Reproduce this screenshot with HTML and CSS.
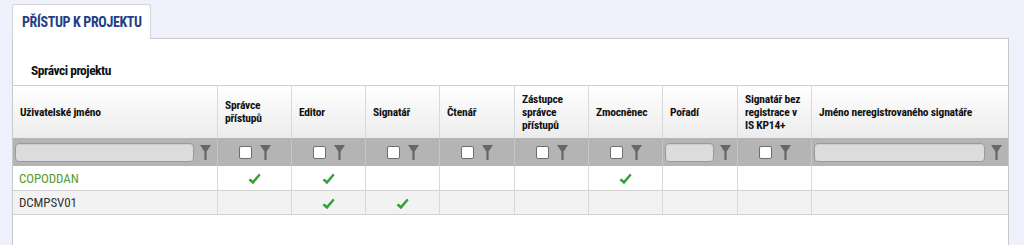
FILE: index.html
```html
<!DOCTYPE html>
<html lang="cs">
<head>
<meta charset="utf-8">
<title>Přístup k projektu</title>
<link rel="stylesheet" href="styles.css">
</head>
<body>
<div class="page">
  <div class="tabs">
    <div class="tab">PŘÍSTUP K PROJEKTU</div>
  </div>
  <div class="panel">
    <div class="title">Správci projektu</div>
    <table class="grid">
      <colgroup>
        <col class="c-name">
        <col class="c-std"><col class="c-std"><col class="c-std"><col class="c-wide">
        <col class="c-std"><col class="c-std"><col class="c-wide"><col class="c-std">
        <col class="c-last">
      </colgroup>
      <thead>
        <tr class="head">
          <th>Uživatelské jméno</th>
          <th>Správce<br>přístupů</th>
          <th>Editor</th>
          <th>Signatář</th>
          <th>Čtenář</th>
          <th>Zástupce<br>správce<br>přístupů</th>
          <th>Zmocněnec</th>
          <th>Pořadí</th>
          <th>Signatář bez<br>registrace v<br>IS KP14+</th>
          <th>Jméno neregistrovaného signatáře</th>
        </tr>
        <tr class="filter">
          <td><div class="f f-text"><span class="inp"></span><svg class="funnel" viewBox="0 0 11 15"><path d="M0 0H11L6.6 6.5V15H4.4V6.5Z"/></svg></div></td>
          <td><div class="f f-check"><span class="cb"></span><svg class="funnel" viewBox="0 0 11 15"><path d="M0 0H11L6.6 6.5V15H4.4V6.5Z"/></svg></div></td>
          <td><div class="f f-check"><span class="cb"></span><svg class="funnel" viewBox="0 0 11 15"><path d="M0 0H11L6.6 6.5V15H4.4V6.5Z"/></svg></div></td>
          <td><div class="f f-check"><span class="cb"></span><svg class="funnel" viewBox="0 0 11 15"><path d="M0 0H11L6.6 6.5V15H4.4V6.5Z"/></svg></div></td>
          <td><div class="f f-check"><span class="cb"></span><svg class="funnel" viewBox="0 0 11 15"><path d="M0 0H11L6.6 6.5V15H4.4V6.5Z"/></svg></div></td>
          <td><div class="f f-check"><span class="cb"></span><svg class="funnel" viewBox="0 0 11 15"><path d="M0 0H11L6.6 6.5V15H4.4V6.5Z"/></svg></div></td>
          <td><div class="f f-check"><span class="cb"></span><svg class="funnel" viewBox="0 0 11 15"><path d="M0 0H11L6.6 6.5V15H4.4V6.5Z"/></svg></div></td>
          <td><div class="f f-text"><span class="inp"></span><svg class="funnel" viewBox="0 0 11 15"><path d="M0 0H11L6.6 6.5V15H4.4V6.5Z"/></svg></div></td>
          <td><div class="f f-check"><span class="cb"></span><svg class="funnel" viewBox="0 0 11 15"><path d="M0 0H11L6.6 6.5V15H4.4V6.5Z"/></svg></div></td>
          <td><div class="f f-text"><span class="inp"></span><svg class="funnel" viewBox="0 0 11 15"><path d="M0 0H11L6.6 6.5V15H4.4V6.5Z"/></svg></div></td>
        </tr>
      </thead>
      <tbody>
        <tr class="row">
          <td class="user user-active">COPODDAN</td>
          <td class="mark"><svg class="check" viewBox="0 0 13 12"><path d="M0.5 7.2L2.4 5.4L4.9 7.6L11 0.6L12.6 2.2L5.1 11.2Z"/></svg></td>
          <td class="mark"><svg class="check" viewBox="0 0 13 12"><path d="M0.5 7.2L2.4 5.4L4.9 7.6L11 0.6L12.6 2.2L5.1 11.2Z"/></svg></td>
          <td class="mark"></td>
          <td class="mark"></td>
          <td class="mark"></td>
          <td class="mark"><svg class="check" viewBox="0 0 13 12"><path d="M0.5 7.2L2.4 5.4L4.9 7.6L11 0.6L12.6 2.2L5.1 11.2Z"/></svg></td>
          <td></td>
          <td class="mark"></td>
          <td></td>
        </tr>
        <tr class="row row-alt">
          <td class="user">DCMPSV01</td>
          <td class="mark"></td>
          <td class="mark"><svg class="check" viewBox="0 0 13 12"><path d="M0.5 7.2L2.4 5.4L4.9 7.6L11 0.6L12.6 2.2L5.1 11.2Z"/></svg></td>
          <td class="mark"><svg class="check" viewBox="0 0 13 12"><path d="M0.5 7.2L2.4 5.4L4.9 7.6L11 0.6L12.6 2.2L5.1 11.2Z"/></svg></td>
          <td class="mark"></td>
          <td class="mark"></td>
          <td class="mark"></td>
          <td></td>
          <td class="mark"></td>
          <td></td>
        </tr>
      </tbody>
    </table>
  </div>
</div>
</body>
</html>
```
FILE: styles.css
```css
* { box-sizing: border-box; }
html, body { margin: 0; padding: 0; }
body {
  background: #eef0fb;
  font-family: Roboto, "Liberation Sans", sans-serif;
  color: #222;
  height: 245px;
  overflow: hidden;
}
.page {
  padding: 4px 0 0 12px;
  width: 1008px;
}
.tabs {
  display: flex;
  position: relative;
  z-index: 1;
  margin-bottom: -1px;
}
.tab {
  width: 139px;
  height: 35px;
  background: #fff;
  border: 1px solid #d2d4dc;
  border-bottom: none;
  border-radius: 3px 3px 0 0;
  color: #243f83;
  font-family: "Roboto Condensed", Roboto, sans-serif;
  font-weight: 700;
  font-size: 14px;
  line-height: 16px;
  letter-spacing: -0.35px;
  padding: 9px 0 0 9px;
  white-space: nowrap;
}
.panel {
  background: #fff;
  border: 1px solid #c9c9c9;
  border-bottom: none;
  width: 997px;
  height: 207px;
}
.title {
  font-family: "Roboto Condensed", Roboto, sans-serif;
  font-size: 13.5px;
  font-weight: 700;
  line-height: 15px;
  letter-spacing: -0.5px;
  color: #111;
  padding: 24px 18px 7px 18px;
}
.grid {
  table-layout: fixed;
  border-collapse: separate;
  border-spacing: 0;
  width: 995px;
}
.c-name { width: 205px; }
.c-std { width: 74px; }
.c-wide { width: 75px; }
.c-last { width: 196px; }
.grid th, .grid td {
  padding: 0;
  border-right: 1px solid #d9d9d9;
}
.grid th:last-child, .grid td:last-child { border-right: none; }
.head th {
  height: 53px;
  border-top: 1px solid #cfcfcf;
  background: linear-gradient(#ffffff, #ececec);
  text-align: left;
  vertical-align: middle;
  font-family: "Roboto Condensed", Roboto, sans-serif;
  font-size: 11.5px;
  line-height: 13px;
  font-weight: 700;
  letter-spacing: -0.2px;
  color: #111;
  padding: 0 4px 0 7px;
  white-space: nowrap;
}
.filter td {
  height: 28px;
  background: #b4b4b4;
  border-right-color: #c6c6c6;
  vertical-align: middle;
}
.f {
  display: flex;
  align-items: center;
  height: 28px;
}
.f-check {
  justify-content: center;
  gap: 8px;
}
.f-text {
  padding: 0 6px 0 2px;
  gap: 6px;
}
.inp {
  flex: 1;
  height: 19px;
  background: #dcdcdc;
  border: 1px solid #9a9a9a;
  border-radius: 4px;
  box-shadow: inset 0 1px 1px rgba(0,0,0,0.08);
}
.cb {
  width: 13px;
  height: 13px;
  background: #fff;
  border: 1px solid #6d6d6d;
  border-radius: 2px;
}
.funnel {
  width: 11px;
  height: 15px;
  fill: #676767;
  flex: none;
}
.row td {
  height: 25px;
  border-bottom: 1px solid #d0d0d0;
  vertical-align: middle;
  font-family: "Roboto Condensed", Roboto, sans-serif;
  font-size: 13px;
  letter-spacing: -0.1px;
}
.row-alt td { height: 24px; background: #f2f2f2; }
.user {
  padding-left: 6px !important;
  color: #333;
}
.user-active { color: #5a9a2e; }
.mark { text-align: center; }
.check {
  width: 13px;
  height: 12px;
  display: inline-block;
  vertical-align: middle;
  fill: #35a13c;
}
```
